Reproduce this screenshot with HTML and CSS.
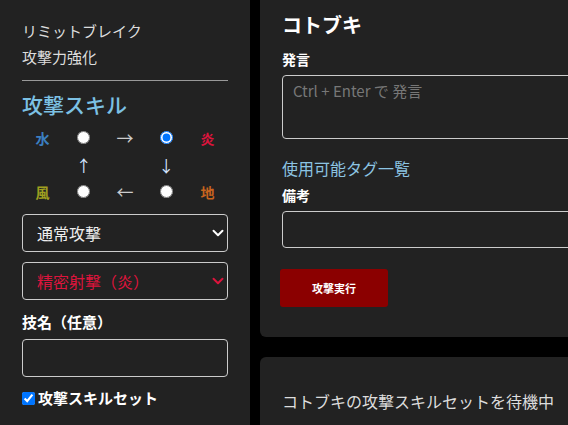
FILE: index.html
```html
<!DOCTYPE html>
<html lang="ja">
<head>
<meta charset="utf-8">
<title>攻撃</title>
<link rel="stylesheet" href="styles.css">
</head>
<body>
<div class="page">
  <aside class="side">
    <div class="info-line">リミットブレイク</div>
    <div class="info-line">攻撃力強化</div>
    <hr class="rule">
    <h2 class="skill-title">攻撃スキル</h2>
    <div class="cycle">
      <span class="el el-water">水</span>
      <span class="cell"><input type="radio" name="el"></span>
      <span class="arrow">→</span>
      <span class="cell"><input type="radio" name="el" checked></span>
      <span class="el el-fire">炎</span>

      <span class="cell"></span>
      <span class="arrow arrow-v">↑</span>
      <span class="cell"></span>
      <span class="arrow arrow-v">↓</span>
      <span class="cell"></span>

      <span class="el el-wind">風</span>
      <span class="cell"><input type="radio" name="el"></span>
      <span class="arrow">←</span>
      <span class="cell"><input type="radio" name="el"></span>
      <span class="el el-earth">地</span>
    </div>
    <div class="select-wrap first">
      <select class="sel"><option>通常攻撃</option></select>
      <svg class="chev" viewBox="0 0 16 16" width="12" height="12"><path d="M2 5l6 6 6-6" fill="none" stroke="#fff" stroke-width="2.6" stroke-linecap="round" stroke-linejoin="round"/></svg>
    </div>
    <div class="select-wrap">
      <select class="sel sel-red"><option>精密射撃（炎）</option></select>
      <svg class="chev" viewBox="0 0 16 16" width="12" height="12"><path d="M2 5l6 6 6-6" fill="none" stroke="#dc143c" stroke-width="2.6" stroke-linecap="round" stroke-linejoin="round"/></svg>
    </div>
    <label class="field-label side-label">技名（任意）</label>
    <input class="text-input side-input" type="text">
    <label class="check-row"><input type="checkbox" checked class="check"><span>攻撃スキルセット</span></label>
  </aside>
  <main class="main">
    <section class="card card-top">
      <h1 class="name">コトブキ</h1>
      <div class="field-label lbl-say">発言</div>
      <textarea class="textarea" placeholder="Ctrl + Enter で 発言"></textarea>
      <a class="tags">使用可能タグ一覧</a>
      <div class="field-label lbl-note">備考</div>
      <input class="text-input note-input" type="text">
      <button class="attack">攻撃実行</button>
    </section>
    <section class="card card-wait">
      <p class="wait">コトブキの攻撃スキルセットを待機中</p>
    </section>
  </main>
</div>
</body>
</html>
```
FILE: styles.css
```css
* { box-sizing: border-box; }
html, body { margin: 0; padding: 0; }
body {
  background: #000;
  font-family: "Noto Sans CJK JP", "Noto Sans", sans-serif;
  color: #ddd;
  overflow: hidden;
  width: 568px;
  height: 425px;
}
.page {
  display: flex;
  align-items: flex-start;
  gap: 10px;
  width: 700px;
}
.side {
  width: 250px;
  height: 425px;
  background: #222;
  padding: 18px 22px 0 22px;
  display: flex;
  flex-direction: column;
}
.info-line {
  font-size: 15px;
  line-height: 26px;
  color: #ddd;
}
.rule {
  width: 100%;
  margin: 10px 0 8px;
  border: 0;
  border-top: 1px solid #999;
  height: 0;
}
.skill-title {
  margin: 0;
  font-size: 21px;
  line-height: 30px;
  font-weight: 500;
  color: #7cc1e4;
}
.cycle {
  margin-top: 5px;
  display: grid;
  grid-template-columns: repeat(5, 1fr);
  grid-auto-rows: 27px;
  align-items: center;
  justify-items: center;
}
.cell { display: flex; align-items: center; justify-content: center; }
.cell input { margin: 0; width: 13px; height: 13px; }
.el { font-size: 14px; font-weight: 700; line-height: 1; }
.el-water { color: #3b7fc0; }
.el-fire { color: #dc143c; }
.el-wind { color: #a0a020; }
.el-earth { color: #c8641e; }
.arrow { font-size: 17px; line-height: 1; color: #ccc; }
.arrow-v { color: #d4e4ff; font-size: 16px; }
.select-wrap { position: relative; margin-top: 10px; }
.select-wrap.first { margin-top: 9px; }
.sel {
  appearance: none;
  -webkit-appearance: none;
  width: 100%;
  height: 38px;
  background: #222;
  border: 1px solid #ccc;
  border-radius: 4px;
  color: #eee;
  font-family: inherit;
  font-size: 16px;
  padding: 0 30px 0 14px;
}
.sel-red { color: #dc143c; }
.chev {
  position: absolute;
  right: 4px;
  top: 13px;
}
.field-label {
  font-weight: 700;
  color: #fff;
  display: block;
}
.side-label {
  margin-top: 11px;
  font-size: 15px;
  line-height: 22px;
}
.text-input {
  background: #222;
  border: 1px solid #ccc;
  border-radius: 4px;
  color: #eee;
  font-family: inherit;
  font-size: 15px;
  padding: 0 10px;
}
.side-input {
  margin-top: 6px;
  width: 100%;
  height: 38px;
}
.check-row {
  margin-top: 10px;
  display: flex;
  align-items: center;
  gap: 3px;
  font-size: 15px;
  line-height: 22px;
  font-weight: 700;
  color: #fff;
}
.check { margin: 0; width: 13px; height: 13px; }
.main {
  width: 420px;
  display: flex;
  flex-direction: column;
  gap: 20px;
}
.card {
  background: #222;
  border-radius: 6px;
  padding: 0 22px;
}
.card-top {
  border-radius: 0 0 6px 6px;
  padding-top: 10px;
  padding-bottom: 30px;
  display: flex;
  flex-direction: column;
  align-items: flex-start;
}
.name {
  margin: 0;
  font-size: 20px;
  line-height: 30px;
  font-weight: 700;
  color: #fff;
}
.lbl-say, .lbl-note {
  font-size: 14px;
  line-height: 20px;
}
.lbl-say { margin-top: 9px; }
.textarea {
  margin-top: 6px;
  width: 100%;
  height: 64px;
  background: #222;
  border: 1px solid #ccc;
  border-radius: 4px;
  color: #eee;
  font-family: inherit;
  font-size: 15px;
  line-height: 22px;
  padding: 4px 10px;
  resize: none;
}
.textarea::placeholder { color: #777; }
.tags {
  margin-top: 17px;
  font-size: 16px;
  line-height: 24px;
  color: #8cc4e2;
}
.lbl-note { margin-top: 5px; }
.note-input {
  margin-top: 6px;
  width: 100%;
  height: 37px;
}
.attack {
  margin-top: 21px;
  margin-left: -2px;
  width: 108px;
  height: 38px;
  background: #8b0000;
  border: 0;
  border-radius: 3px;
  color: #fff;
  font-family: inherit;
  font-size: 11px;
  font-weight: 700;
}
.card-wait {
  padding-top: 32px;
  padding-bottom: 20px;
}
.wait {
  margin: 0;
  font-size: 16px;
  line-height: 24px;
  color: #ddd;
  white-space: nowrap;
}
```
